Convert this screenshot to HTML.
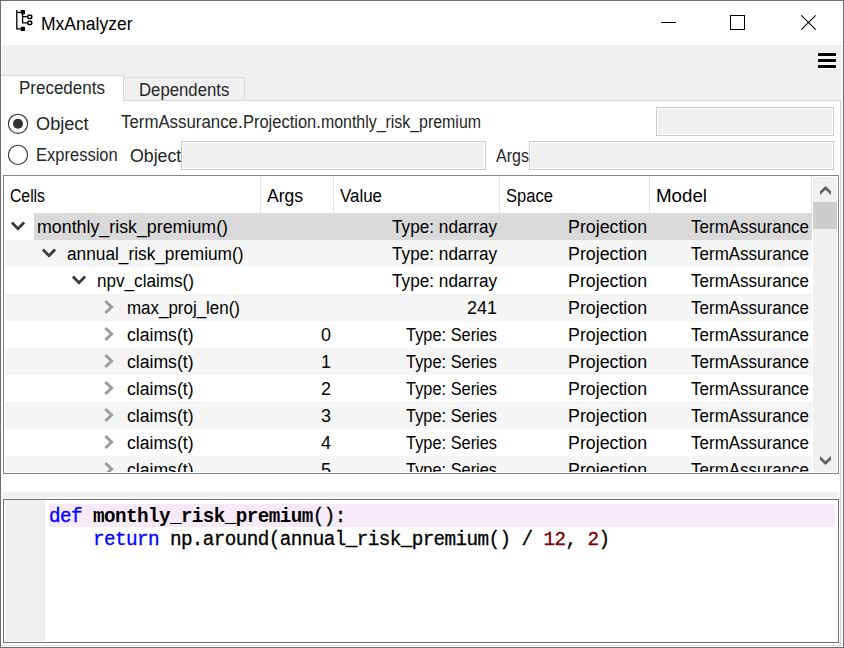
<!DOCTYPE html>
<html><head><meta charset="utf-8"><title>MxAnalyzer</title>
<style>
html,body{margin:0;padding:0;}
body{width:844px;height:648px;overflow:hidden;background:#f0f0f0;position:relative;font-family:"Liberation Sans",sans-serif;}
.a{position:absolute;box-sizing:border-box;}
.t{position:absolute;white-space:nowrap;line-height:1;}
.s{font-family:"Liberation Sans",sans-serif;}
.m{font-family:"Liberation Mono",monospace;-webkit-text-stroke:0.3px;}
.m b{-webkit-text-stroke:0;}
.row{position:absolute;left:5px;width:807px;height:27px;}
.ic{position:absolute;overflow:visible;}
#tree{position:absolute;left:4px;top:176px;width:834px;height:297px;overflow:hidden;}
</style></head><body>
<!-- window frame -->
<div class="a" style="left:0;top:0;width:844px;height:648px;border:1px solid #6e6e6e;"></div>
<!-- title bar -->
<div class="a" style="left:1px;top:1px;width:842px;height:44px;background:#fff;"></div>
<!-- tab pane -->
<div class="a" style="left:1px;top:100px;width:840px;height:546px;background:#fff;border-top:1px solid #d9d9d9;border-right:1px solid #d9d9d9;border-bottom:1px solid #d9d9d9;"></div>
<div class="a" style="left:842px;top:45px;width:1px;height:602px;background:#fcfcfc;"></div>
<div class="a" style="left:1px;top:646px;width:842px;height:1px;background:#fcfcfc;"></div>
<div class="a" style="left:1px;top:45px;width:1px;height:55px;background:#fafafa;"></div>
<!-- splitter handle -->
<div class="a" style="left:3px;top:492px;width:836px;height:6px;background:#f0f0f0;"></div>
<!-- tabs -->
<div class="a" style="left:1px;top:75px;width:123px;height:26px;background:#fff;border:1px solid #d9d9d9;border-bottom:none;border-left:none;"></div>
<div class="a" style="left:123px;top:77px;width:122px;height:23px;background:#f0f0f0;border:1px solid #d9d9d9;border-bottom:none;"></div>
<!-- text inputs -->
<div class="a" style="left:656px;top:107px;width:178px;height:29px;background:#f0f0f0;border:1px solid #cbcbcb;box-shadow:inset 0 0 0 1px #fff;"></div>
<div class="a" style="left:181px;top:141px;width:305px;height:29px;background:#f0f0f0;border:1px solid #cbcbcb;box-shadow:inset 0 0 0 1px #fff;"></div>
<div class="a" style="left:529px;top:141px;width:305px;height:29px;background:#f0f0f0;border:1px solid #cbcbcb;box-shadow:inset 0 0 0 1px #fff;"></div>
<!-- tree frame -->
<div class="a" style="left:3px;top:175px;width:836px;height:299px;background:#fff;border:1px solid #828790;"></div>
<div style="position:absolute;left:0;top:0;width:844px;height:472px;overflow:hidden;">
<div class="row" style="top:213px;background:#ffffff"></div>
<svg class="ic" style="left:10.100000000000001px;top:219.8px" width="16" height="12" viewBox="-8 -6 16 12"><polygon points="-5.1,-4.6 -7.1,-2.6 0,4.8 7.1,-2.6 5.1,-4.6 0,0.7" fill="#3c3c3c"/></svg>
<div class="row" style="top:240px;background:#f5f5f5"></div>
<svg class="ic" style="left:40.9px;top:246.8px" width="16" height="12" viewBox="-8 -6 16 12"><polygon points="-5.1,-4.6 -7.1,-2.6 0,4.8 7.1,-2.6 5.1,-4.6 0,0.7" fill="#3c3c3c"/></svg>
<div class="row" style="top:267px;background:#ffffff"></div>
<svg class="ic" style="left:70.5px;top:273.8px" width="16" height="12" viewBox="-8 -6 16 12"><polygon points="-5.1,-4.6 -7.1,-2.6 0,4.8 7.1,-2.6 5.1,-4.6 0,0.7" fill="#3c3c3c"/></svg>
<div class="row" style="top:294px;background:#f5f5f5"></div>
<svg class="ic" style="left:103px;top:299.1px" width="12" height="16" viewBox="-6 -8 12 16"><polygon points="-2.6,-7.1 -4.8,-5.1 0.5,0 -4.8,5.1 -2.6,7.1 4.8,0" fill="#9d9d9d"/></svg>
<div class="row" style="top:321px;background:#ffffff"></div>
<svg class="ic" style="left:103px;top:326.1px" width="12" height="16" viewBox="-6 -8 12 16"><polygon points="-2.6,-7.1 -4.8,-5.1 0.5,0 -4.8,5.1 -2.6,7.1 4.8,0" fill="#9d9d9d"/></svg>
<div class="row" style="top:348px;background:#f5f5f5"></div>
<svg class="ic" style="left:103px;top:353.1px" width="12" height="16" viewBox="-6 -8 12 16"><polygon points="-2.6,-7.1 -4.8,-5.1 0.5,0 -4.8,5.1 -2.6,7.1 4.8,0" fill="#9d9d9d"/></svg>
<div class="row" style="top:375px;background:#ffffff"></div>
<svg class="ic" style="left:103px;top:380.1px" width="12" height="16" viewBox="-6 -8 12 16"><polygon points="-2.6,-7.1 -4.8,-5.1 0.5,0 -4.8,5.1 -2.6,7.1 4.8,0" fill="#9d9d9d"/></svg>
<div class="row" style="top:402px;background:#f5f5f5"></div>
<svg class="ic" style="left:103px;top:407.1px" width="12" height="16" viewBox="-6 -8 12 16"><polygon points="-2.6,-7.1 -4.8,-5.1 0.5,0 -4.8,5.1 -2.6,7.1 4.8,0" fill="#9d9d9d"/></svg>
<div class="row" style="top:429px;background:#ffffff"></div>
<svg class="ic" style="left:103px;top:434.1px" width="12" height="16" viewBox="-6 -8 12 16"><polygon points="-2.6,-7.1 -4.8,-5.1 0.5,0 -4.8,5.1 -2.6,7.1 4.8,0" fill="#9d9d9d"/></svg>
<div class="row" style="top:456px;background:#f5f5f5"></div>
<svg class="ic" style="left:103px;top:461.1px" width="12" height="16" viewBox="-6 -8 12 16"><polygon points="-2.6,-7.1 -4.8,-5.1 0.5,0 -4.8,5.1 -2.6,7.1 4.8,0" fill="#9d9d9d"/></svg>

</div>
<!-- selected row -->
<div class="a" style="left:34px;top:213px;width:778px;height:27px;background:#d9d9d9;"></div>
<!-- header separators -->
<div class="a" style="left:260px;top:176px;width:1px;height:37px;background:#e5e5e5;"></div>
<div class="a" style="left:333px;top:176px;width:1px;height:37px;background:#e5e5e5;"></div>
<div class="a" style="left:499px;top:176px;width:1px;height:37px;background:#e5e5e5;"></div>
<div class="a" style="left:649px;top:176px;width:1px;height:37px;background:#e5e5e5;"></div>
<div class="a" style="left:811px;top:176px;width:1px;height:37px;background:#e5e5e5;"></div>
<!-- scrollbar -->
<div class="a" style="left:813px;top:177px;width:24px;height:295px;background:#f0f0f0;"></div>
<div class="a" style="left:813px;top:202px;width:24px;height:27px;background:#cdcdcd;"></div>
<!-- splitter + code editor -->
<div class="a" style="left:3px;top:499px;width:836px;height:144px;background:#fff;border:1px solid #6e6e6e;"></div>
<div class="a" style="left:5px;top:500px;width:40px;height:141px;background:#f0f0f0;"></div>
<div class="a" style="left:49px;top:504px;width:786px;height:23px;background:#f7eaf8;"></div>
<div id="texts" style="position:absolute;left:0;top:0;width:844px;height:472px;overflow:hidden;">
<span class="t s" style="top:14.76px;font-size:18px;color:#000;left:41px;transform-origin:0 50%;transform:scaleX(0.9731);">MxAnalyzer</span>
<span class="t s" style="top:80.19px;font-size:17.5px;color:#262626;left:18.8px;transform-origin:0 50%;transform:scaleX(0.9703);">Precedents</span>
<span class="t s" style="top:82.19px;font-size:17.5px;color:#262626;left:139.3px;transform-origin:0 50%;transform:scaleX(0.9567);">Dependents</span>
<span class="t s" style="top:116.19px;font-size:17.5px;color:#262626;left:35.5px;transform-origin:0 50%;transform:scaleX(1.0380);">Object</span>
<span class="t s" style="top:114.19px;font-size:17.5px;color:#262626;left:120.8px;transform-origin:0 50%;transform:scaleX(0.9617);">TermAssurance.</span>
<span class="t s" style="top:114.19px;font-size:17.5px;color:#262626;left:242.6px;transform-origin:0 50%;transform:scaleX(0.9409);">Projection.</span>
<span class="t s" style="top:114.19px;font-size:17.5px;color:#262626;left:320.8px;transform-origin:0 50%;transform:scaleX(0.9089);">monthly_risk_premium</span>
<span class="t s" style="top:147.19px;font-size:17.5px;color:#262626;left:36.3px;transform-origin:0 50%;transform:scaleX(0.9437);">Expression</span>
<span class="t s" style="top:147.69px;font-size:17.5px;color:#262626;left:129.7px;transform-origin:0 50%;transform:scaleX(1.0143);">Object</span>
<span class="t s" style="top:147.89px;font-size:17.5px;color:#262626;left:496.4px;transform-origin:0 50%;transform:scaleX(0.9143);">Args</span>
<span class="t s" style="top:186.76px;font-size:18px;color:#000;left:10px;transform-origin:0 50%;transform:scaleX(0.8747);">Cells</span>
<span class="t s" style="top:186.76px;font-size:18px;color:#000;left:267px;transform-origin:0 50%;transform:scaleX(0.9726);">Args</span>
<span class="t s" style="top:186.76px;font-size:18px;color:#000;left:340px;transform-origin:0 50%;transform:scaleX(0.9395);">Value</span>
<span class="t s" style="top:186.76px;font-size:18px;color:#000;left:506px;transform-origin:0 50%;transform:scaleX(0.9207);">Space</span>
<span class="t s" style="top:186.76px;font-size:18px;color:#000;left:656px;transform-origin:0 50%;transform:scaleX(1.0402);">Model</span>
<span class="t s" style="top:217.76px;font-size:18px;color:#000;left:36.6px;transform-origin:0 50%;transform:scaleX(0.9894);">monthly_risk_premium()</span>
<span class="t s" style="top:217.76px;font-size:18px;color:#000;right:347.00px;transform-origin:100% 50%;transform:scaleX(0.9540);">Type: ndarray</span>
<span class="t s" style="top:217.76px;font-size:18px;color:#000;right:197.00px;transform-origin:100% 50%;transform:scaleX(0.9869);">Projection</span>
<span class="t s" style="top:217.76px;font-size:18px;color:#000;right:35.00px;transform-origin:100% 50%;transform:scaleX(0.9436);">TermAssurance</span>
<span class="t s" style="top:244.76px;font-size:18px;color:#000;left:67px;transform-origin:0 50%;transform:scaleX(0.9588);">annual_risk_premium()</span>
<span class="t s" style="top:244.76px;font-size:18px;color:#000;right:347.00px;transform-origin:100% 50%;transform:scaleX(0.9540);">Type: ndarray</span>
<span class="t s" style="top:244.76px;font-size:18px;color:#000;right:197.00px;transform-origin:100% 50%;transform:scaleX(0.9869);">Projection</span>
<span class="t s" style="top:244.76px;font-size:18px;color:#000;right:35.00px;transform-origin:100% 50%;transform:scaleX(0.9436);">TermAssurance</span>
<span class="t s" style="top:271.76px;font-size:18px;color:#000;left:97px;transform-origin:0 50%;transform:scaleX(0.9507);">npv_claims()</span>
<span class="t s" style="top:271.76px;font-size:18px;color:#000;right:347.00px;transform-origin:100% 50%;transform:scaleX(0.9540);">Type: ndarray</span>
<span class="t s" style="top:271.76px;font-size:18px;color:#000;right:197.00px;transform-origin:100% 50%;transform:scaleX(0.9869);">Projection</span>
<span class="t s" style="top:271.76px;font-size:18px;color:#000;right:35.00px;transform-origin:100% 50%;transform:scaleX(0.9436);">TermAssurance</span>
<span class="t s" style="top:298.76px;font-size:18px;color:#000;left:127px;transform-origin:0 50%;transform:scaleX(0.9412);">max_proj_len()</span>
<span class="t s" style="top:298.76px;font-size:18px;color:#000;right:347.00px;transform-origin:100% 50%;transform:scaleX(0.9984);">241</span>
<span class="t s" style="top:298.76px;font-size:18px;color:#000;right:197.00px;transform-origin:100% 50%;transform:scaleX(0.9869);">Projection</span>
<span class="t s" style="top:298.76px;font-size:18px;color:#000;right:35.00px;transform-origin:100% 50%;transform:scaleX(0.9436);">TermAssurance</span>
<span class="t s" style="top:325.76px;font-size:18px;color:#000;left:127px;transform-origin:0 50%;transform:scaleX(0.9779);">claims(t)</span>
<span class="t s" style="top:325.76px;font-size:18px;color:#000;right:512.50px;transform-origin:100% 50%;transform:scaleX(0.9984);">0</span>
<span class="t s" style="top:325.76px;font-size:18px;color:#000;right:347.00px;transform-origin:100% 50%;transform:scaleX(0.9096);">Type: Series</span>
<span class="t s" style="top:325.76px;font-size:18px;color:#000;right:197.00px;transform-origin:100% 50%;transform:scaleX(0.9869);">Projection</span>
<span class="t s" style="top:325.76px;font-size:18px;color:#000;right:35.00px;transform-origin:100% 50%;transform:scaleX(0.9436);">TermAssurance</span>
<span class="t s" style="top:352.76px;font-size:18px;color:#000;left:127px;transform-origin:0 50%;transform:scaleX(0.9779);">claims(t)</span>
<span class="t s" style="top:352.76px;font-size:18px;color:#000;right:512.50px;transform-origin:100% 50%;transform:scaleX(0.9984);">1</span>
<span class="t s" style="top:352.76px;font-size:18px;color:#000;right:347.00px;transform-origin:100% 50%;transform:scaleX(0.9096);">Type: Series</span>
<span class="t s" style="top:352.76px;font-size:18px;color:#000;right:197.00px;transform-origin:100% 50%;transform:scaleX(0.9869);">Projection</span>
<span class="t s" style="top:352.76px;font-size:18px;color:#000;right:35.00px;transform-origin:100% 50%;transform:scaleX(0.9436);">TermAssurance</span>
<span class="t s" style="top:379.76px;font-size:18px;color:#000;left:127px;transform-origin:0 50%;transform:scaleX(0.9779);">claims(t)</span>
<span class="t s" style="top:379.76px;font-size:18px;color:#000;right:512.50px;transform-origin:100% 50%;transform:scaleX(0.9984);">2</span>
<span class="t s" style="top:379.76px;font-size:18px;color:#000;right:347.00px;transform-origin:100% 50%;transform:scaleX(0.9096);">Type: Series</span>
<span class="t s" style="top:379.76px;font-size:18px;color:#000;right:197.00px;transform-origin:100% 50%;transform:scaleX(0.9869);">Projection</span>
<span class="t s" style="top:379.76px;font-size:18px;color:#000;right:35.00px;transform-origin:100% 50%;transform:scaleX(0.9436);">TermAssurance</span>
<span class="t s" style="top:406.76px;font-size:18px;color:#000;left:127px;transform-origin:0 50%;transform:scaleX(0.9779);">claims(t)</span>
<span class="t s" style="top:406.76px;font-size:18px;color:#000;right:512.50px;transform-origin:100% 50%;transform:scaleX(0.9984);">3</span>
<span class="t s" style="top:406.76px;font-size:18px;color:#000;right:347.00px;transform-origin:100% 50%;transform:scaleX(0.9096);">Type: Series</span>
<span class="t s" style="top:406.76px;font-size:18px;color:#000;right:197.00px;transform-origin:100% 50%;transform:scaleX(0.9869);">Projection</span>
<span class="t s" style="top:406.76px;font-size:18px;color:#000;right:35.00px;transform-origin:100% 50%;transform:scaleX(0.9436);">TermAssurance</span>
<span class="t s" style="top:433.76px;font-size:18px;color:#000;left:127px;transform-origin:0 50%;transform:scaleX(0.9779);">claims(t)</span>
<span class="t s" style="top:433.76px;font-size:18px;color:#000;right:512.50px;transform-origin:100% 50%;transform:scaleX(0.9984);">4</span>
<span class="t s" style="top:433.76px;font-size:18px;color:#000;right:347.00px;transform-origin:100% 50%;transform:scaleX(0.9096);">Type: Series</span>
<span class="t s" style="top:433.76px;font-size:18px;color:#000;right:197.00px;transform-origin:100% 50%;transform:scaleX(0.9869);">Projection</span>
<span class="t s" style="top:433.76px;font-size:18px;color:#000;right:35.00px;transform-origin:100% 50%;transform:scaleX(0.9436);">TermAssurance</span>
<span class="t s" style="top:460.76px;font-size:18px;color:#000;left:127px;transform-origin:0 50%;transform:scaleX(0.9779);">claims(t)</span>
<span class="t s" style="top:460.76px;font-size:18px;color:#000;right:512.50px;transform-origin:100% 50%;transform:scaleX(0.9984);">5</span>
<span class="t s" style="top:460.76px;font-size:18px;color:#000;right:347.00px;transform-origin:100% 50%;transform:scaleX(0.9096);">Type: Series</span>
<span class="t s" style="top:460.76px;font-size:18px;color:#000;right:197.00px;transform-origin:100% 50%;transform:scaleX(0.9869);">Projection</span>
<span class="t s" style="top:460.76px;font-size:18px;color:#000;right:35.00px;transform-origin:100% 50%;transform:scaleX(0.9436);">TermAssurance</span>

</div>

<!-- title icon -->
<svg class="a" style="left:10px;top:5px;" width="30" height="35" viewBox="10 5 30 35">
<g fill="none" stroke="#000" stroke-width="1.3">
<path d="M16.8 10 V28.9 H21 M16.8 12.3 H21"/>
<path d="M22.6 14 V22.9 H27.2 M22.6 16.7 H27.2"/>
<rect x="27.8" y="15.2" width="3.9" height="3.2" rx="0.9" stroke-width="1.5"/>
<rect x="27.8" y="21.3" width="3.9" height="3.2" rx="0.9" stroke-width="1.5"/>
</g>
<rect x="20.8" y="10" width="4.2" height="4.2" rx="0.6" fill="#000"/>
<rect x="20.8" y="26.8" width="4.2" height="4.1" rx="0.6" fill="#000"/>
</svg>
<!-- window controls -->
<div class="a" style="left:661px;top:22px;width:15px;height:1px;background:#000;"></div>
<div class="a" style="left:730px;top:15px;width:15px;height:15px;border:1px solid #000;"></div>
<svg class="a" style="left:799px;top:13px;" width="20" height="20" viewBox="799 13 20 20"><path d="M801.3 15.3 L815.7 29.7 M815.7 15.3 L801.3 29.7" stroke="#000" stroke-width="1.1" fill="none"/></svg>
<!-- hamburger -->
<div class="a" style="left:817px;top:52px;width:20px;height:17px;">
<div class="a" style="left:1px;top:0;width:18px;height:5px;background:#fafafa;"></div>
<div class="a" style="left:1px;top:6px;width:18px;height:5px;background:#fafafa;"></div>
<div class="a" style="left:1px;top:12px;width:18px;height:5px;background:#fafafa;"></div>
<div class="a" style="left:1px;top:1px;width:18px;height:3px;background:#000;border-radius:0.6px;"></div>
<div class="a" style="left:1px;top:7px;width:18px;height:3px;background:#000;border-radius:0.6px;"></div>
<div class="a" style="left:1px;top:13px;width:18px;height:3px;background:#000;border-radius:0.6px;"></div>
</div>
<!-- radios -->
<svg class="a" style="left:6px;top:112px;" width="24" height="24" viewBox="0 0 24 24"><circle cx="12" cy="11.8" r="9.6" fill="#fff" stroke="#333" stroke-width="1.1"/><circle cx="12" cy="11.8" r="5" fill="#333"/></svg>
<svg class="a" style="left:6px;top:143px;" width="24" height="24" viewBox="0 0 24 24"><circle cx="12" cy="11.9" r="9.6" fill="#fff" stroke="#333" stroke-width="1.1"/></svg>
<!-- scroll arrows -->
<svg class="a" style="left:813px;top:180px;" width="24" height="20" viewBox="813 180 24 20"><polygon points="820,195.1 825.5,189.7 831,195.1 831,191.3 825.5,185.9 820,191.3" fill="#606060"/></svg>
<svg class="a" style="left:813px;top:450px;" width="24" height="20" viewBox="813 450 24 20"><polygon points="820,455.9 825.5,461.3 831,455.9 831,459.7 825.5,465.1 820,459.7" fill="#606060"/></svg>
<!-- code -->
<div class="t m" style="left:49px;top:508px;font-size:19.3px;letter-spacing:-0.5819px;color:#000;white-space:pre;"><span style="color:#0000ff">def</span> <b>monthly_risk_premium</b>():</div>
<div class="t m" style="left:49px;top:531px;font-size:19.3px;letter-spacing:-0.5819px;color:#000;white-space:pre;">    <span style="color:#0000ff">return</span> np.around(annual_risk_premium() / <span style="color:#800000">12</span>, <span style="color:#800000">2</span>)</div>
</body></html>
